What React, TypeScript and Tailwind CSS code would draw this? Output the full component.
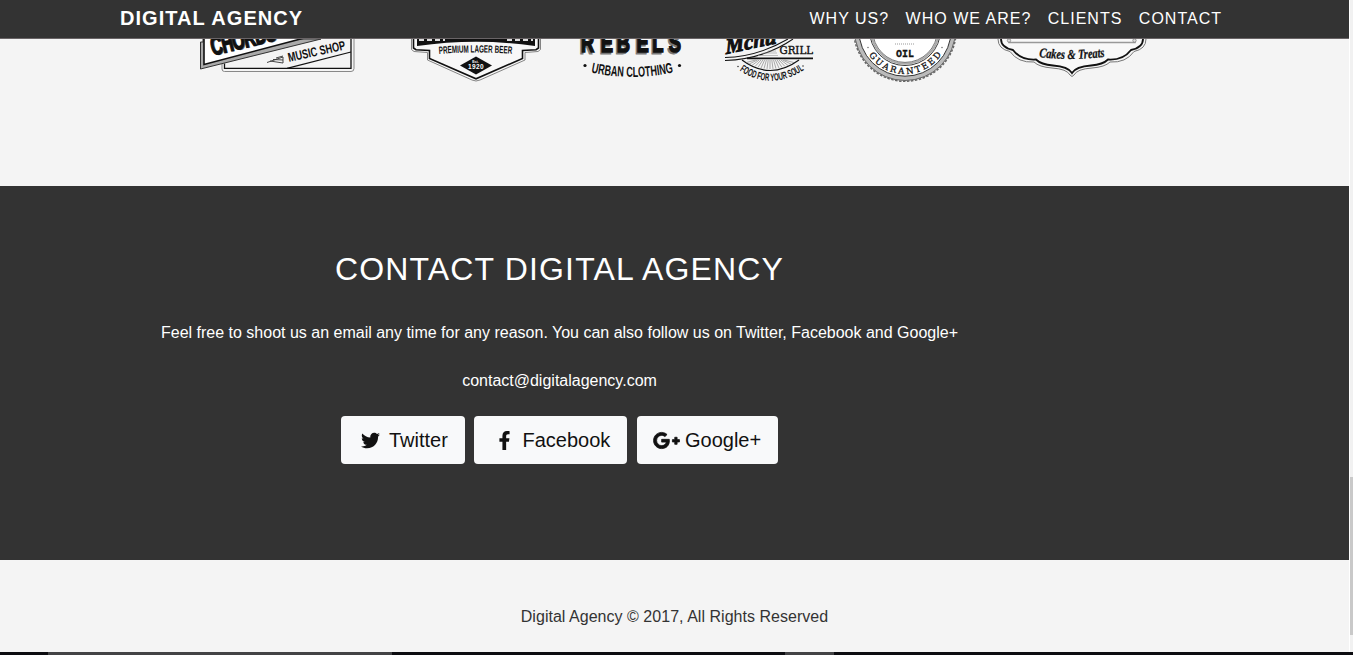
import React from "react";
import { FaTwitter, FaFacebookF, FaGooglePlusG } from "react-icons/fa";

const narrow = "'Liberation Sans Narrow', 'Liberation Sans', sans-serif";

function ChordsLogo() {
  return (
    <svg className="block h-[48px] w-[160px]" viewBox="197 39 160 48" fill="none">
      <path d="M222 64V69q0 2.500 2.500 2.500H351q3 0 3-3V39" stroke="#888" strokeWidth="1" />
      <path d="M224.500 63.500V68.300H351V39" stroke="#111" strokeWidth="1.300" />
      <path d="M287 68.300L351 52" stroke="#111" strokeWidth="1.200" />
      <path d="M200.500 42V69L321 39H203V42Z" fill="#aaa" stroke="#333" strokeWidth="1" />
      <path d="M204 38V64.500L310 36.500" fill="#fff" stroke="#111" strokeWidth="1.600" />
      <g transform="translate(213 56.500) rotate(-13.500) scale(.62 1)" fontFamily={narrow} fontWeight="bold" fontSize="26">
        <text x="1.500" y="0" textLength="107" fill="#777">CHORDS</text>
        <text x="0" y="-1" textLength="107" fill="#111" stroke="#111" strokeWidth="1.400">CHORDS</text>
      </g>
      <text x="289" y="62" transform="rotate(-12.500 289 62)" fontFamily={narrow} fontWeight="bold" fontSize="13" textLength="58.500" lengthAdjust="spacingAndGlyphs" fill="#111">MUSIC SHOP</text>
      <path d="M267 62.500L283 57V63L270 61M273 59.500L283 60M276 58L283 56" stroke="#333" strokeWidth=".9" />
    </svg>
  );
}

function LagerLogo() {
  return (
    <svg className="block h-[48px] w-[132px]" viewBox="410 39 132 48" fill="none">
      <path d="M411.500 39V49.500L414 51.500L427.500 52.500V60L472 80Q476 82 480 80L525 60V52.500L538 51.500L540.500 49.500V39" fill="#f8f8f8" stroke="#777" strokeWidth=".9" />
      <path d="M413.500 39V48L416 49.700L429.500 50.500V58.500L476 78.800L522.500 58.500V50.500L536 49.700L538.500 48V39" stroke="#111" strokeWidth="1.600" />
      <path d="M417 38V46Q476 37.500 535 46V38Z" fill="#111" />
      <path d="M419 40H445M507 40H533" stroke="#ddd" strokeWidth="2" strokeDasharray="5 3" />
      <path id="lagerArc" d="M439 54Q476 51 513 54" />
      <text fontFamily={narrow} fontWeight="bold" fontSize="10.500" fill="#111">
        <textPath href="#lagerArc" textLength="73" lengthAdjust="spacingAndGlyphs">PREMIUM LAGER BEER</textPath>
      </text>
      <path d="M460 65.500L476 56.500L492 65.500L476 74.500Z" fill="#111" />
      <text x="475.500" y="62.500" textAnchor="middle" fontFamily={narrow} fontWeight="bold" fontSize="3.500" fill="#fff">Est.</text>
      <text x="468" y="69" fontFamily="'Liberation Sans', sans-serif" fontWeight="bold" fontSize="6.500" textLength="15.500" fill="#fff">1920</text>
    </svg>
  );
}

function RebelsLogo() {
  return (
    <svg className="block h-[48px] w-[108px]" viewBox="578 39 108 48" fill="none">
      <g transform="translate(580 52) scale(.66 1)" fontFamily={narrow} fontWeight="bold" fontSize="28">
        <text x="-1 29 53 83 107 132" y="1.800" fill="#777" stroke="#777" strokeWidth=".8">REBELS</text>
        <text x="1.500 31.500 55.500 85.500 109.500 134.500" y="0" fill="#111" stroke="#111" strokeWidth="1.600">REBELS</text>
      </g>
      <path id="rebelsArc" d="M591 72.500Q632 81.500 675 72" />
      <text fontFamily={narrow} fontWeight="bold" fontSize="14.500" fill="#111">
        <textPath href="#rebelsArc" textLength="83" lengthAdjust="spacingAndGlyphs">URBAN CLOTHING</textPath>
      </text>
      <circle cx="585" cy="65.500" r="1.600" fill="#111" />
      <circle cx="679.500" cy="65.500" r="1.600" fill="#111" />
    </svg>
  );
}

function GrillLogo() {
  const rays = Array.from({ length: 17 }, (_, i) => i - 8);
  return (
    <svg className="block h-[48px] w-[92px]" viewBox="723 39 92 48" fill="none">
      <g transform="translate(726 54) rotate(-12) skewX(-8)">
        <text fontFamily="'Liberation Serif', serif" fontStyle="italic" fontWeight="bold" fontSize="22" textLength="52" lengthAdjust="spacingAndGlyphs" fill="#111" stroke="#111" strokeWidth="1">Mcnu</text>
      </g>
      <path d="M725 57.500Q757 57 788 39M725 60.500Q764 59 793 39" stroke="#111" strokeWidth="1.100" />
      <path d="M758 55.500H778M763 53H777M768 51H776" stroke="#999" strokeWidth=".6" />
      <text x="779.500" y="54" fontFamily="'DejaVu Serif', serif" fontSize="10.500" textLength="33.500" lengthAdjust="spacingAndGlyphs" fill="#111" stroke="#111" strokeWidth=".4">GRILL</text>
      <path d="M747 58.300H813" stroke="#111" strokeWidth="1.700" />
      <path d="M742 60Q770 81 799 60" stroke="#111" strokeWidth="1.200" />
      {rays.map((n) => (
        <path key={n} d={`M${770 + n * 1.8} 60L${770 + n * 3} ${69 - n * n * 0.1}`} stroke="#777" strokeWidth=".6" />
      ))}
      <path id="grillArc" d="M739.500 70.500Q770 91.500 804 70" />
      <text fontFamily={narrow} fontWeight="bold" fontSize="10.500" fill="#111">
        <textPath href="#grillArc" textLength="69" lengthAdjust="spacingAndGlyphs">FOOD FOR YOUR SOUL</textPath>
      </text>
      <circle cx="738" cy="66.500" r=".7" fill="#111" />
      <circle cx="803" cy="66" r=".7" fill="#111" />
    </svg>
  );
}

function OilLogo() {
  return (
    <svg className="block h-[48px] w-[108px]" viewBox="851 39 108 48" fill="none">
      <circle cx="905" cy="30" r="50.500" fill="#bbb" stroke="#666" strokeWidth="1" />
      <circle cx="905" cy="30" r="51.300" stroke="#666" strokeWidth="1.500" strokeDasharray="2.500 1.500" />
      <circle cx="905" cy="30" r="46.200" fill="#fff" stroke="#333" strokeWidth="1" />
      <circle cx="905" cy="30" r="35.500" stroke="#333" strokeWidth="1" />
      <circle cx="905" cy="30" r="33.800" stroke="#aaa" strokeWidth="2" />
      <circle cx="905" cy="30" r="32.400" stroke="#444" strokeWidth=".7" />
      <path d="M895 44H915" stroke="#999" strokeWidth="1" strokeDasharray="1 1" />
      <text x="896" y="57" fontFamily="'Liberation Mono', monospace" fontWeight="bold" fontSize="11" textLength="18" lengthAdjust="spacingAndGlyphs" fill="#111" stroke="#111" strokeWidth=".3">OIL</text>
      <path id="oilArc" d="M868.300 54.300A44 44 0 0 0 941.700 54.300" />
      <text fontFamily="'DejaVu Serif', serif" fontSize="8.500" fill="#111" stroke="#111" strokeWidth=".3">
        <textPath href="#oilArc" startOffset="1" textLength="85">GUARANTEED</textPath>
      </text>
      <circle cx="868" cy="47.500" r=".8" fill="#777" />
      <circle cx="942" cy="47.500" r=".8" fill="#777" />
    </svg>
  );
}

function CakesLogo() {
  return (
    <svg className="block h-[48px] w-[150px]" viewBox="997 39 150 48" fill="none">
      <path d="M998 39Q998 49 1010 51.500Q1018 63 1034 62Q1039 67 1052 68Q1067 69 1070 75L1072 76.500L1074 75Q1077 69 1092 68Q1105 67 1110 62Q1126 63 1134 51.500Q1146 49 1146 39" stroke="#777" strokeWidth="1" />
      <path d="M1001 39Q1001 47.500 1013 50Q1021 60.500 1036 59.500Q1041 64.500 1053 65.500Q1068 66.500 1072 73Q1076 66.500 1091 65.500Q1103 64.500 1108 59.500Q1123 60.500 1131 50Q1143 47.500 1143 39" fill="#f8f8f8" stroke="#111" strokeWidth="1.800" />
      <path d="M1009 39V42.500H1135V39" stroke="#999" strokeWidth="1.600" />
      <circle cx="1009" cy="40.500" r="1.700" fill="#ddd" stroke="#777" strokeWidth=".7" />
      <circle cx="1134.500" cy="40.500" r="1.700" fill="#ddd" stroke="#777" strokeWidth=".7" />
      <path id="cakesArc" d="M1039 57Q1072 61 1106 56.500" />
      <text fontFamily="'Liberation Serif', serif" fontStyle="italic" fontWeight="bold" fontSize="13.500" fill="#111" stroke="#111" strokeWidth=".3">
        <textPath href="#cakesArc" textLength="66" lengthAdjust="spacingAndGlyphs">Cakes &amp; Treats</textPath>
      </text>
    </svg>
  );
}

const links = ["WHY US?", "WHO WE ARE?", "CLIENTS", "CONTACT"];

export default function App() {
  return (
    <div className="flex h-[655px] w-[1353px] flex-col overflow-hidden bg-[#f4f4f4] font-['Liberation_Sans',Arial,sans-serif] text-[16px] leading-6 text-[#333]">
      <div className="flex h-[652px]">
        <main className="flex w-[1349px] flex-col">
          <header className="flex h-[39px] shrink-0 items-center justify-between border-b border-[#696466] bg-[#333] pl-[120px] pr-[127px] text-white">
            <h1 className="mt-[-3px] text-[20px] font-bold tracking-[1.05px]">DIGITAL AGENCY</h1>
            <nav className="flex gap-[16.5px] tracking-[1px]">
              {links.map((link) => (
                <a key={link} href="#">{link}</a>
              ))}
            </nav>
          </header>

          <section className="flex h-[147px] shrink-0 items-start pl-[197px]">
            <ChordsLogo />
            <div className="ml-[53px]"><LagerLogo /></div>
            <div className="ml-[36px]"><RebelsLogo /></div>
            <div className="ml-[37px]"><GrillLogo /></div>
            <div className="ml-[36px]"><OilLogo /></div>
            <div className="ml-[38px]"><CakesLogo /></div>
          </section>

          <section className="h-[374px] shrink-0 bg-[#333] pt-[64px] text-white">
            <div className="flex w-[1119px] flex-col items-center">
              <h2 className="text-[32px] leading-[38px] tracking-[1.15px]">CONTACT DIGITAL AGENCY</h2>
              <p className="mt-[33px]">Feel free to shoot us an email any time for any reason. You can also follow us on Twitter, Facebook and Google+</p>
              <p className="mt-[24px]">contact@digitalagency.com</p>
              <div className="mt-[23px] flex text-[20px] text-[#111]">
                <a href="#" className="flex h-12 w-[124px] items-center rounded-[4px] bg-[#f8f9fa] pl-[20px]">
                  <FaTwitter className="h-[19px] w-[19px]" />
                  <span className="ml-[9px]">Twitter</span>
                </a>
                <a href="#" className="ml-[9px] flex h-12 w-[153px] items-center rounded-[4px] bg-[#f8f9fa] pl-[21px]">
                  <FaFacebookF className="h-[19px] w-[19px]" />
                  <span className="ml-[8.5px]">Facebook</span>
                </a>
                <a href="#" className="ml-[10px] flex h-12 w-[141px] items-center rounded-[4px] bg-[#f8f9fa] pl-[16px]">
                  <FaGooglePlusG className="h-[27px] w-[27px] stroke-current stroke-[18]" />
                  <span className="ml-[5px]">Google+</span>
                </a>
              </div>
            </div>
          </section>

          <footer className="flex grow justify-center pt-[45px]">
            <p className="tracking-[0.03px]">Digital Agency © 2017, All Rights Reserved</p>
          </footer>
        </main>
        <aside className="w-[4px] border-l border-white bg-[#f1f1f1] pt-[477px]">
          <div className="h-[158px] bg-[#c9c9c9]" />
        </aside>
      </div>
      <div className="flex h-[3px] bg-[#0c0c10]">
        <div className="ml-[48px] w-[344px] bg-[#434345]" />
        <div className="ml-[393px] w-[49px] bg-[#434345]" />
      </div>
    </div>
  );
}
